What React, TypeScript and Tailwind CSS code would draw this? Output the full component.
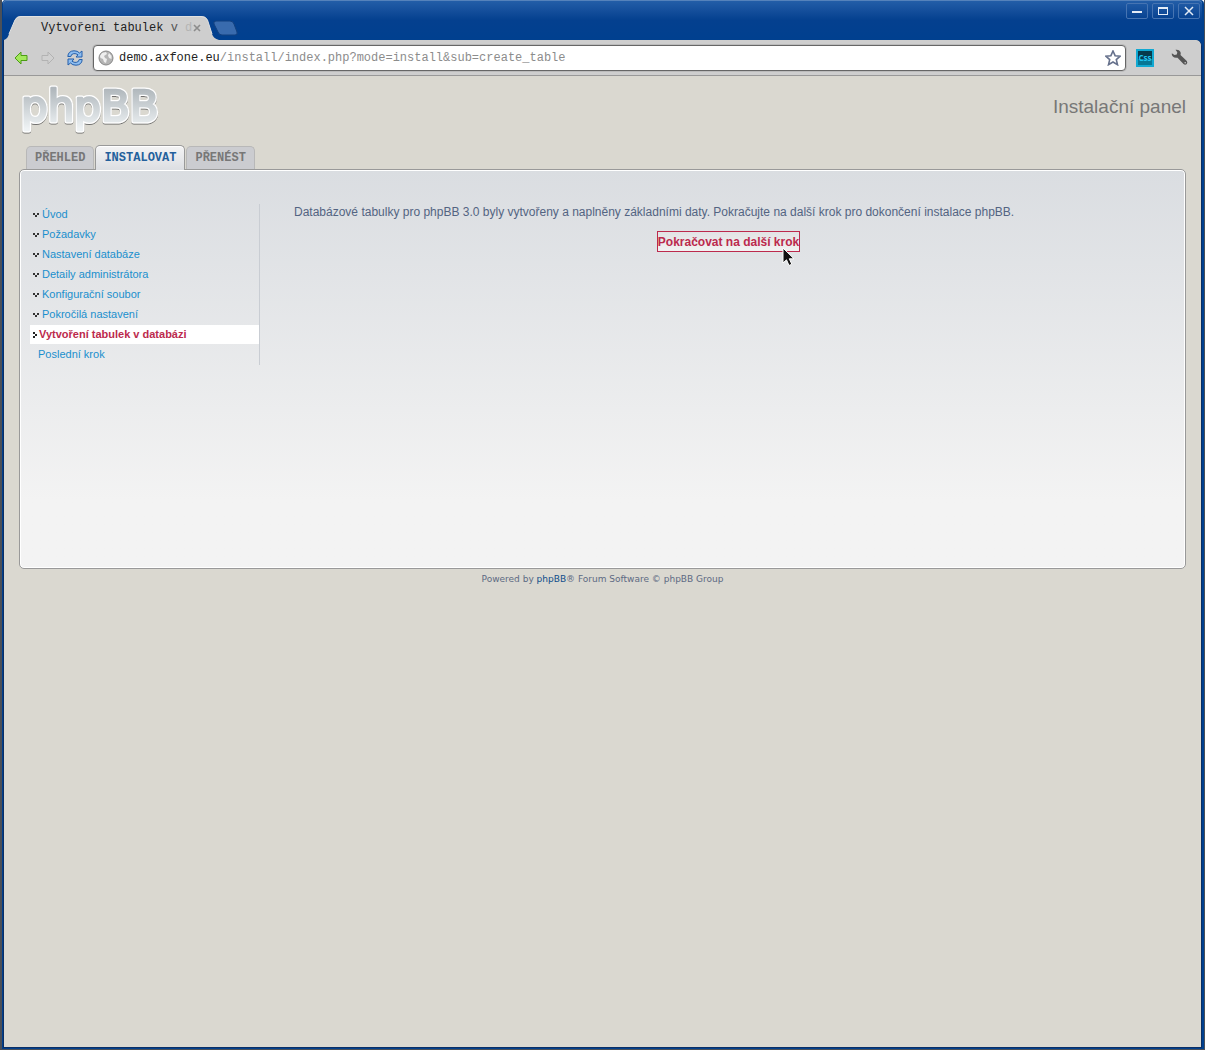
// phpBB installer: the "create table" step, shown inside its browser window.

import type { ReactNode } from 'react';

interface Step {
  name: string;
  state: 'done' | 'active' | 'next';
}

const STEPS: Step[] = [
  { name: 'Úvod',                       state: 'done' },
  { name: 'Požadavky',                  state: 'done' },
  { name: 'Nastavení databáze',         state: 'done' },
  { name: 'Detaily administrátora',     state: 'done' },
  { name: 'Konfigurační soubor',        state: 'done' },
  { name: 'Pokročilá nastavení',        state: 'done' },
  { name: 'Vytvoření tabulek v databázi', state: 'active' },
  { name: 'Poslední krok',              state: 'next' },
];

const STEP_STYLE: Record<Step['state'], string> = {
  done:   'pl-[3px] gap-[3px] text-[#1a8fcd]',
  active: 'pl-[3px] gap-[2px] bg-white font-bold text-[#bc2a4d]',
  next:   'pl-2 text-[#1a8fcd]',
};

const TABS = [
  { name: 'PŘEHLED',    active: false },
  { name: 'INSTALOVAT', active: true },
  { name: 'PŘENÉST',    active: false },
];

function WindowButton({ label, children }: { label: string; children: ReactNode }) {
  return (
    <button
      type="button"
      aria-label={label}
      className="flex h-4 w-[22px] items-center justify-center rounded-[2px] border border-[#4674b2]"
    >
      <svg width="12" height="12" viewBox="0 0 12 12" fill="none" stroke="#e4ecf6">
        {children}
      </svg>
    </button>
  );
}

function TitleBar() {
  return (
    <header className="flex h-10 justify-between rounded-t-[4px] bg-linear-to-b from-[#245fa9] via-[#04408f] via-50% to-[#00408f] pr-[2px] pl-px inset-shadow-[0_1px_0_#5582bb]">
      <div className="flex items-end">
        <div className="relative flex h-6 w-[215px] items-center pl-[37px]">
          <svg className="absolute inset-0" width="215" height="24" viewBox="0 0 215 24">
            <path
              d="M0 24C3 23 4 21 5 18L11 4Q12.500 0 17 0H197Q202 0 203.500 4L208 18C209 21 211 23 215 24Z"
              fill="#cecece"
            />
            <path d="M5 18L11 4Q12.500 .5 17 .5H197Q202 .5 203.500 4L208 18" fill="none" stroke="#e1e1e1" />
          </svg>
          <span className="relative font-['Liberation_Mono',monospace] text-[12px] whitespace-nowrap text-[#222]">
            Vytvoření tabulek <span className="text-[#555]">v</span> <span className="text-[#b4b4b4]">d</span>
          </span>
          <button type="button" aria-label="Zavřít kartu" className="relative ml-px">
            <svg width="8" height="8" viewBox="0 0 8 8" stroke="#8c8c8c" strokeWidth="1.600">
              <path d="M1 1l6 6M7 1l-6 6" />
            </svg>
          </button>
        </div>
        <button type="button" aria-label="Nová karta" className="relative -ml-[6px] mb-1">
          <svg width="26" height="16" viewBox="0 0 26 16">
            <path
              d="M3 1H17Q20 1 21 4L24 12Q25 15 22 15H9Q6 15 5 12L1 4Q0 1 3 1Z"
              fill="#396bae"
              stroke="#12407f"
            />
          </svg>
        </button>
      </div>
      <div className="flex gap-1 pt-[3px]">
        <WindowButton label="Minimalizovat"><path d="M1 7h10" strokeWidth="2" /></WindowButton>
        <WindowButton label="Maximalizovat">
          <rect x="1.500" y="2.500" width="9" height="7" />
          <path d="M1 3h10" strokeWidth="2" />
        </WindowButton>
        <WindowButton label="Zavřít"><path d="M2 2l8 8M10 2l-8 8" strokeWidth="1.500" /></WindowButton>
      </div>
    </header>
  );
}

function Arrow({ fill, stroke, flip }: { fill: string; stroke: string; flip?: boolean }) {
  return (
    <svg width="14" height="14" viewBox="0 0 14 14" className={flip ? 'rotate-180' : ''}>
      <path d="M7 1V4.500H13V9.500H7V13L1 7Z" fill={fill} stroke={stroke} strokeLinejoin="round" />
    </svg>
  );
}

function Toolbar() {
  return (
    <nav className="flex h-9 items-center rounded-tr-md border-b border-[#999] bg-[#cecece] pr-[13px] pl-[10px]">
      <button type="button" aria-label="Zpět"><Arrow fill="#a3e85c" stroke="#4b9c14" /></button>
      <button type="button" aria-label="Vpřed" className="ml-[13px]"><Arrow fill="#d0d0d0" stroke="#b2b2b2" flip /></button>
      <button type="button" aria-label="Obnovit" className="ml-3">
        <svg width="16" height="16" viewBox="0 0 16 16" strokeLinejoin="round">
          <path d="M.8 6.500Q1.200 1 7 .8Q10.500 .7 12.500 3L15 1V7H9L11 4.800Q9 3.300 6.800 3.600Q4 4 3.800 6.500Z" fill="#8dbdf0" stroke="#245fab" />
          <path d="M15.200 9.500Q14.800 15 9 15.200Q5.500 15.300 3.500 13L1 15V9H7L5 11.200Q7 12.700 9.200 12.400Q12 12 12.200 9.500Z" fill="#8dbdf0" stroke="#245fab" />
        </svg>
      </button>
      <div className="ml-[10px] flex h-[26px] flex-1 items-center rounded-[4px] border border-[#666] bg-white px-1 font-['Liberation_Mono',monospace] text-[12px] shadow-[0_0_0_1px_#bbb]">
        <svg width="16" height="16" viewBox="0 0 16 16" className="shrink-0">
          <circle cx="8" cy="8" r="7" fill="#b4b4b4" stroke="#888" />
          <path d="M2 6L4 3L8 2L9 4L6 6L7 8L9 9L8 13L6 12L5 9L2.500 8Z" fill="#eee" />
          <path d="M11 3L13.500 6V9L11 8L10 5.500Z" fill="#eee" />
        </svg>
        <label htmlFor="url" className="ml-[5px] text-[#222]">demo.axfone.eu</label>
        <input
          id="url"
          defaultValue="/install/index.php?mode=install&sub=create_table"
          className="min-w-0 flex-1 bg-transparent text-[#8c8c8c] outline-none"
        />
        <button type="button" aria-label="Přidat do záložek">
          <svg width="16" height="16" viewBox="0 0 16 16">
            <path
              d="M8 1L10.100 5.700L15.200 6.200L11.300 9.600L12.500 14.700L8 12L3.500 14.700L4.700 9.600L.8 6.200L5.900 5.700Z"
              fill="#fff"
              stroke="#66718c"
              strokeWidth="1.600"
            />
          </svg>
        </button>
      </div>
      <button
        type="button"
        className="ml-[10px] flex h-[18px] w-[18px] items-center justify-center border-2 border-[#11a9d2] bg-linear-to-b from-[#063b4c] from-60% to-[#087795] to-60% font-['Open_Sans',sans-serif] text-[8px] font-bold text-[#20c4ef]"
      >
        Css
      </button>
      <button type="button" aria-label="Nastavení" className="ml-[17px]">
        <svg width="17" height="17" viewBox="0 0 17 17">
          <path
            d="M4.500 .8Q8 0 9.500 3Q10 4.500 9.500 6L15.800 12Q17 14 15.500 15.300Q14 16.300 12.500 15L6.500 8.700Q3.500 9.300 1.800 7.500Q.5 6 .8 4.300L3.500 6L5.800 5.500L6.300 3.300Z"
            fill="#555"
          />
          <circle cx="14.200" cy="13.800" r=".8" fill="#ccc" />
        </svg>
      </button>
    </nav>
  );
}

function Logo() {
  return (
    <svg width="150" height="68" viewBox="0 0 150 68" role="img" aria-label="phpBB">
      <defs>
        <linearGradient id="silver" gradientUnits="userSpaceOnUse" x1="0" y1="13" x2="0" y2="53">
          <stop offset="0" stopColor="#b0b7bc" />
          <stop offset="1" stopColor="#eff3f5" />
        </linearGradient>
        <filter id="drop" x="-5%" y="-5%" width="110%" height="120%">
          <feDropShadow dx="0" dy="1" stdDeviation=".7" floodColor="#555" floodOpacity=".8" />
        </filter>
      </defs>
      <g
        fontFamily="'DejaVu Sans', sans-serif"
        fontSize="42"
        strokeLinejoin="round"
        filter="url(#drop)"
      >
        <text x="2" y="45" fill="#fff" stroke="#fff" strokeWidth="5">phpBB</text>
        <text x="2" y="45" fill="url(#silver)" stroke="url(#silver)" strokeWidth="2.500">phpBB</text>
      </g>
    </svg>
  );
}

// Little pixel chevron, pointing down for finished steps, right for the current one
function Chevron({ right }: { right?: boolean }) {
  return right ? (
    <svg width="4" height="6" viewBox="0 0 4 6" fill="#222" shapeRendering="crispEdges" className="shrink-0">
      <path d="M0 0h2v2H0zM2 2h2v2H2zM0 4h2v2H0z" />
    </svg>
  ) : (
    <svg width="6" height="4" viewBox="0 0 6 4" fill="#333" shapeRendering="crispEdges" className="shrink-0">
      <path d="M0 0h2v2H0zM4 0h2v2H4zM2 2h2v2H2z" />
    </svg>
  );
}

export default function App() {
  return (
    <div className="flex min-h-screen flex-col border-r border-b border-l-2 border-[#4b5058] font-['Liberation_Sans',sans-serif]">
      <div className="flex flex-1 flex-col rounded-t-[4px] border-r-2 border-b border-l border-[#00408f] bg-[#00408f]">
        <TitleBar />
        <div className="flex flex-1 flex-col rounded-tr-md border-x border-b border-[#0a2e63] bg-[#dad8d0]">
          <Toolbar />

          <div className="px-[15px]">
            <div className="flex items-start justify-between">
              <a href="#logo" className="block"><Logo /></a>
              <h1 className="pt-[19px] text-[19px] leading-6 text-[#777]">Instalační panel</h1>
            </div>

            {/* Tabs */}
            <nav className="relative mt-px -mb-px flex items-end gap-px pl-[7px] font-['Liberation_Mono',monospace] text-[12px] leading-4 font-bold">
              {TABS.map(({ name, active }) => (
                <a
                  key={name}
                  href="#tab"
                  className={
                    active
                      ? 'rounded-t-[5px] border border-b-0 border-[#999] bg-linear-to-b from-[#f4f4f5] to-[#dcdee2] px-2 py-1 text-[#23609c] inset-shadow-[0_1px_0_#fff]'
                      : 'mb-px rounded-t-[5px] border border-b-0 border-[#b8b8b8] bg-[#cbccd0] px-2 py-[3px] text-[#777]'
                  }
                >
                  {name}
                </a>
              ))}
            </nav>

            {/* Panel */}
            <div className="flex min-h-[400px] rounded-[5px] border border-[#999] bg-[#f3f3f3] bg-linear-to-b from-[#dadde1] to-[#f3f3f3] to-[330px] px-[10px] pt-[34px] inset-shadow-[0_0_0_1px_#fff]">
              <ul className="h-[161px] w-[230px] shrink-0 border-r border-[#c9cdd3] text-[11px]">
                {STEPS.map(({ name, state }) => (
                  <li key={name} className="h-5 pt-px">
                    <a href="#step" className={`flex h-[19px] items-center ${STEP_STYLE[state]}`}>
                      {state !== 'next' && <Chevron right={state === 'active'} />}
                      {name}
                    </a>
                  </li>
                ))}
              </ul>
              <main className="flex-1 pr-3 pl-[34px]">
                <p className="text-[12px] leading-4 text-[#536482]">
                  Databázové tabulky pro phpBB 3.0 byly vytvořeny a naplněny základními daty. Pokračujte na další krok
                  pro dokončení instalace phpBB.
                </p>
                <div className="mt-[11px] flex justify-center">
                  <div className="relative">
                    <button
                      type="button"
                      className="block h-[21px] border border-[#bc2a4d] bg-linear-to-b from-[#e2e3e5] to-[#f2f2f2] text-[12px] leading-4 font-bold text-[#bc2a4d]"
                    >
                      Pokračovat na další krok
                    </button>
                    <svg className="absolute top-4 right-1" width="14" height="20" viewBox="0 0 14 20">
                      <path
                        d="M1 1V16L4.500 12.800L7 18.500L9.800 17.200L7.300 11.800H12Z"
                        fill="#111"
                        stroke="#fff"
                      />
                    </svg>
                  </div>
                </div>
              </main>
            </div>

            <footer className="pt-1 text-center font-['DejaVu_Sans',sans-serif] text-[9px] leading-3 text-[#5d6a83]">
              Powered by <a href="#phpbb" className="text-[#0f4d8a]">phpBB</a>® Forum Software © phpBB Group
            </footer>
          </div>
        </div>
      </div>
    </div>
  );
}
